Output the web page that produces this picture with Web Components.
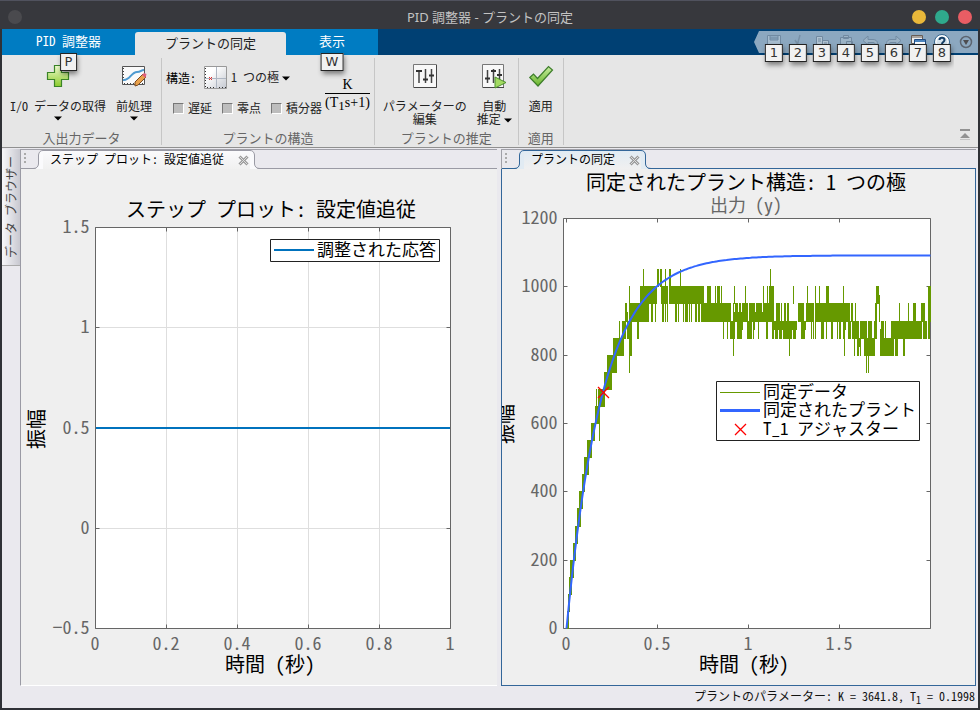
<!DOCTYPE html>
<html lang="ja">
<head>
<meta charset="utf-8">
<title>PID 調整器 - プラントの同定</title>
<style>
html, body { height: 100%; margin: 0; }
body { font: 12px/13px "Noto Sans Mono CJK JP", "Noto Sans CJK JP", sans-serif; color: #222; background: #37383d; }
</style>
</head>
<body>
<app-window>
  <title-bar slot="title">PID 調整器 - プラントの同定</title-bar>
  <tab-strip slot="tabs">
    <ribbon-tab tip="P" style="--pad:34px">PID 調整器</ribbon-tab>
    <ribbon-tab selected style="--pad:30px">プラントの同定</ribbon-tab>
    <ribbon-tab tip="W" style="--pad:33px">表示</ribbon-tab>
    <quick-bar slot="quick"></quick-bar>
  </tab-strip>
  <tool-ribbon slot="ribbon">
    <ribbon-section label="入出力データ">
      <tool-button icon="plus" menu="below">I/O データの取得</tool-button>
      <tool-button icon="preprocess" menu="below">前処理</tool-button>
    </ribbon-section>
    <ribbon-section label="プラントの構造" style="--left:4px;--right:4px"><structure-form></structure-form></ribbon-section>
    <ribbon-section label="プラントの推定" style="--right:6px">
      <tool-button icon="sliders">パラメーターの<br>編集</tool-button>
      <tool-button icon="auto" menu="inline">自動<br>推定</tool-button>
    </ribbon-section>
    <ribbon-section label="適用" style="--left:10px;--right:10px">
      <tool-button icon="check">適用</tool-button>
    </ribbon-section>
  </tool-ribbon>
  <side-rail slot="rail">データ ブラウザー</side-rail>
  <doc-panel slot="left" label="ステップ プロット: 設定値追従"><axes-plot kind="step"></axes-plot></doc-panel>
  <doc-panel slot="right" label="プラントの同定" active><axes-plot kind="plant"></axes-plot></doc-panel>
  <status-bar slot="status">プラントのパラメーター: K = 3641.8, T<sub>1</sub> = 0.1998</status-bar>
</app-window>

<script>
function define(name, template) {
  customElements.define(name, class extends HTMLElement {
    constructor() { super(); this.attachShadow({ mode: 'open' }); }
    connectedCallback() {
      this.shadowRoot.innerHTML = '<style>*{box-sizing:border-box}button{font:inherit;color:inherit;background:none;border:0;padding:0;margin:0}svg{display:block}</style>' +
        (typeof template === 'function' ? template(this) : template);
    }
  });
}

define('key-tip', `<style>
:host{position:absolute;z-index:5;left:50%;transform:translateX(-50%);box-sizing:border-box;padding:0 4px;
 border:1px solid #222;background:#f1f1f1;color:#333;font:13px/16px "DejaVu Sans",sans-serif;box-shadow:1px 3px 5px #0007}
</style><slot></slot>`);

define('title-bar', `<style>
:host{display:grid;grid-template-columns:1fr auto 1fr;align-items:center;height:29px;box-sizing:border-box;padding:3px 8px 0;
 background:#37383d;border-top:1px solid #50525e;color:#c3c3c3;font:13px/20px "Noto Sans","Noto Sans CJK JP",sans-serif}
button{display:block;width:14px;height:14px;border-radius:50%;background:var(--c)}
.ctl{display:flex;gap:9px;justify-content:flex-end}
</style><span><button style="--c:#4a4a4e" aria-label="メニュー"></button></span><span><slot></slot></span>
<span class="ctl"><button style="--c:#e9b83a" aria-label="最小化"></button><button style="--c:#2fa98d" aria-label="最大化"></button><button style="--c:#e85d64" aria-label="閉じる"></button></span>`);

define('app-window', `<style>
:host{display:flex;flex-direction:column;min-height:100%;box-sizing:border-box;background:#2f3136;padding-bottom:2px}
.frame{flex:1;display:flex;flex-direction:column;margin:0 2px;background:#eae9ee}
.work{flex:1;display:grid;grid-template-columns:18px 477fr 4px 475fr 2px;padding-top:1px}
.l{grid-column:2;display:grid}.r{grid-column:4;display:grid}
</style><slot name="title"></slot><div class="frame"><slot name="tabs"></slot><slot name="ribbon"></slot>
<main class="work"><slot name="rail"></slot><div class="l"><slot name="left"></slot></div><div class="r"><slot name="right"></slot></div></main>
<slot name="status"></slot></div>`);

define('tab-strip', `<style>
:host{display:flex;justify-content:space-between;height:26px;background:#004073}
.tabs{display:flex;align-items:flex-end;background:#007cc2}
</style><nav class="tabs"><slot></slot></nav><slot name="quick"></slot>`);

define('ribbon-tab', el => `<style>
:host{display:block;position:relative;height:26px;color:#fff;font-size:13px}
:host([selected]){height:23px;background:#e6e6e6;color:#222;border-radius:3px 3px 0 0}
button{height:100%;padding:0 var(--pad) 3px;line-height:20px;white-space:nowrap;display:block}
:host([selected]) button{padding-bottom:2px}
key-tip{top:24px}
</style><button><slot></slot></button>${el.getAttribute('tip') ? `<key-tip>${el.getAttribute('tip')}</key-tip>` : ''}`);

const quickIcons = [
  ['保存', '<path d="M1.5 1.500h13v13h-13z M4 2v4h8V2 M4 11h8" stroke="#708aa2" fill="#a7bdcf"/><path d="M4 4h8" stroke="#708aa2"/>'],
  ['切り取り', '<path d="M10 1L7 12M5 6l5 8" stroke="#7890a7" fill="none" stroke-width="1.5"/>'],
  ['コピー', '<path d="M2.500 2.500h6v9h-6z M8.500 6.500h6v8h-6z M4 5h3 M4 7h3 M10 9h3 M10 11h3" fill="#b0c3d2" stroke="#7189a0"/>'],
  ['貼り付け', '<path d="M2.500 3.500h11v11h-11z M5.500 1.500h5v3h-5z M8.500 7.500h6v7h-6z" fill="#9db4c7" stroke="#7189a0"/>'],
  ['元に戻す', '<path d="M6 2L1 6.500 6 11V8.500h5c3 0 3 4 0 5h2c4-3 3-8-2-8H6z" fill="#9bb2c5" stroke="#738ca4"/>'],
  ['やり直し', '<path d="M10 2l5 4.500-5 4.500V8.500H5c-3 0-3 4 0 5H3c-4-3-3-8 2-8h5z" fill="#9bb2c5" stroke="#738ca4"/>'],
  ['ウィンドウ', '<path d="M1.500 1.500h11v8h-11z" fill="#eee" stroke="#665c55"/><path d="M2 3h10" stroke="#665c55"/><path d="M4.500 5.500h11v8h-11z" fill="#fff" stroke="#204b80"/><path d="M5 7h10" stroke="#4b83bd" stroke-width="2"/>'],
  ['ヘルプ', '<circle cx="8" cy="8" r="6.500" fill="#d9e5ee" stroke="#fff" stroke-width="2"/><circle cx="8" cy="8" r="7.500" fill="none" stroke="#35658d"/><path d="M5.500 6c0-3 5-3 5 0 0 2-2.500 2-2.500 4" fill="none" stroke="#163f66" stroke-width="2"/>']
];
define('quick-bar', `<style>
:host{display:flex;margin-top:2px;height:22px;padding-left:8px;background:#8ca8c0;clip-path:polygon(0 50%,5px 0,100% 0,100% 22px,calc(100% - 24px) 22px,calc(100% - 24px) 60px,5px 60px,5px 100%)}
.q{position:relative;width:24px}.q button{display:grid;place-items:center;width:24px;height:22px}
key-tip{top:13px}
</style>${quickIcons.map(([n, s], i) => `<span class="q"><button aria-label="${n}"><svg width="16" height="16" viewBox="0 0 16 16">${s}</svg></button><key-tip>${i + 1}</key-tip></span>`).join('')}
<span class="q"><button aria-label="オプション"><svg width="14" height="14" viewBox="0 0 14 14"><circle cx="7" cy="7" r="5.500" fill="none" stroke="#5c6570" stroke-width="1.500"/><path d="M4 5h6L7 10z" fill="#4d4d50"/></svg></button></span>`);

define('tool-ribbon', `<style>
:host{display:flex;padding:3px 0 2px;background:#e6e6e6;border-bottom:1px solid #909090}
button{margin:0 7px 5px auto;align-self:flex-end}
</style><slot></slot><button aria-label="リボンを最小化"><svg width="12" height="12" viewBox="0 0 12 12"><path d="M1 1h10v2H1z M6 5l5 5H1z" fill="#929292"/><path d="M1 11.500h10" stroke="#c4c4c4"/></svg></button>`);

define('ribbon-section', el => `<style>
:host{display:flex;flex-direction:column;border-right:1px solid #c6c6c6}
.row{display:flex;gap:10px;height:73px;padding:0 var(--right,9px) 0 var(--left,8px)}
.t{height:14px;font-size:13px;line-height:13px;text-align:center;color:#666}
</style><div class="row"><slot></slot></div><div class="t">${el.getAttribute('label')}</div>`);

const sliders = '<path d="M.5.500h23v23H.5z" fill="#f8f8f8" stroke="#777"/><path d="M1 23.500h22.500V1" stroke="#444" fill="none"/><path d="M6 6v13M12.500 5v14M18.500 5v14" stroke="#444" stroke-width="1.500"/><path d="M3 7h6M10 15.500h5M16 11.500h5" stroke="#333" stroke-width="2"/>';
const icons = {
  plus: '<defs><linearGradient id="g" x2="0" y2="1"><stop stop-color="#effcd0"/><stop offset="1" stop-color="#8ccb2c"/></linearGradient></defs><path d="M8.500 1.500h7v7h7v7h-7v7h-7v-7h-7v-7h7z" fill="url(#g)" stroke="#3b8428" stroke-width="1.200"/>',
  preprocess: '<path d="M.5 2.500h22v18H.5z" fill="#fafafa" stroke="#555"/><path d="M2 19.500h20M1.500 4v15" stroke="#444" stroke-dasharray="1 2"/><path d="M1 16C8 17 9 8 15 8c4 0 4-2 7-2" fill="none" stroke="#4e9ad0" stroke-width="2"/><path d="M13 18l8-8 3 3-8 8-3 1z" fill="#e9a14a" stroke="#7a4a20"/><path d="M20 11l2-2 2.500 1-1 4z" fill="#df5f7b"/>',
  sliders,
  auto: '<path d="M.5.500h21v23H.5z" fill="#f8f8f8" stroke="#777"/><path d="M1 23.500h21" stroke="#444"/><path d="M5.500 6v13M11.500 5v14M17.500 5v14" stroke="#444" stroke-width="1.500"/><path d="M3 14.500h5M9 7h5M15 11h5" stroke="#333" stroke-width="2"/><path d="M13 13l11 5.500-11 5.500z" fill="#a3da62" stroke="#4c902d"/>',
  check: '<defs><linearGradient id="g" x2="0" y2="1"><stop stop-color="#c7eda0"/><stop offset="1" stop-color="#69b52b"/></linearGradient></defs><path d="M.8 13.500L4.500 10l4 4.500L19.500 2.500 23.500 6 9 22z" fill="url(#g)" stroke="#3d7d2b" stroke-width="1.200"/>'
};
const arrow = '<svg class="arrow" width="8" height="5" viewBox="0 0 8 5"><path d="M0 .5h8L4 4.500z" fill="#000"/></svg>';
define('tool-button', el => {
  const menu = el.getAttribute('menu');
  return `<style>
:host{display:block}
button{display:flex;flex-direction:column;align-items:center;padding-top:6px;white-space:nowrap}
.icon{overflow:visible;margin-bottom:11px}
.below{display:grid;height:13px;place-items:center}
.txt .arrow{display:inline-block;margin-left:3px;vertical-align:1px}
</style><button><svg class="icon" width="24" height="24" viewBox="0 0 24 24">${icons[el.getAttribute('icon')]}</svg>
<span class="txt"><slot></slot>${menu === 'inline' ? arrow : ''}</span>${menu === 'below' ? `<span class="below">${arrow}</span>` : ''}</button>`;
});

define('structure-form', `<style>
:host{display:flex;gap:3px}
.top{display:flex;align-items:center;margin-top:7px;height:24px;color:#000}
.top svg{margin:0 4px 0 8px}
select{appearance:none;border:0;padding:0 11px 0 0;margin:0;font:inherit;color:#222;line-height:16px;background:none;width:60px}
.sel{position:relative}.sel .arrow{position:absolute;right:1px;top:7px;margin:0;pointer-events:none}
.checks{display:flex;gap:10px;margin:12px 0 0 7px}
.checks label{display:flex;align-items:center;gap:4px;line-height:14px;white-space:nowrap}
input{appearance:none;width:11px;height:11px;margin:0;background:#bdbdbd;border:1px solid #fff;border-top-color:#777;border-left-color:#777}
.tf{align-self:flex-start;margin-top:18px;font:14px/17px "Liberation Serif",serif;color:#000;text-align:center}
.tf b{display:block;font-weight:400;border-bottom:1px solid #000}
.tf sub{font-size:13px;line-height:0;vertical-align:-3px}
</style><div><div class="top"><label for="s">構造:</label>
<svg width="23" height="23" viewBox="0 0 23 23"><defs><linearGradient id="g" x2="1" y2="1"><stop offset=".3" stop-color="#fff"/><stop offset="1" stop-color="#c4c8d0"/></linearGradient></defs><path d="M.5.500h22v22H.5z" fill="url(#g)" stroke="#999"/><path d="M1.500 2v19.500H22" fill="none" stroke="#333" stroke-dasharray="1 2"/><path d="M12.500 1v21M1 12.500h21" stroke="#aeb6c2"/><path d="M5 11l3 3M8 11l-3 3" stroke="#e03030"/></svg>
<span class="sel"><select id="s"><option>1 つの極</option></select>${arrow}</span></div>
<div class="checks"><label><input type="checkbox">遅延</label><label><input type="checkbox">零点</label><label><input type="checkbox">積分器</label></div></div>
<div class="tf"><b>K</b>(T<sub>1</sub>s+1)</div>`);

define('side-rail', `<style>
:host{display:block}
button{display:block;width:18px;height:117px;color:#444;background:linear-gradient(270deg,#f8f8fa,#c8c8d0);border-top:1px solid #aaa;
 writing-mode:vertical-rl;text-orientation:sideways;transform:rotate(180deg);white-space:nowrap;text-align:center;line-height:18px}
</style><button><slot></slot></button>`);

define('doc-panel', el => {
  const a = el.hasAttribute('active'), c = a ? '#336699' : '#9a9aa4', f = a ? '#e1ebf3' : '#fafafc';
  return `<style>
:host{display:flex;flex-direction:column;min-width:0}
.bar{display:flex;height:20px;border-top:1px solid #a0a0a8;border-left:1px solid #a0a0a8;background:linear-gradient(${c},${c}) 0 100%/100% 1px no-repeat}
.grip{width:12px;padding:3px 0 0 3px}
.tab{display:flex;align-items:center;height:19px;border-top:1px solid ${c};background:linear-gradient(${f},#f0f0f0)}
.tab button{white-space:nowrap;line-height:16px;padding:0 14px 2px 7px;color:#000}.tab .x{padding:0 1px 0 0}
.body{flex:1;min-height:0;display:grid;background:#efefef;border-left:1px solid ${c};${a ? `border-right:1px solid ${c};border-bottom:1px solid ${c}` : 'border-bottom:1px solid #fff'}}
</style><div class="bar"><span class="grip"><svg width="3" height="12"><path d="M0 1h2M0 5h2M0 9h2" stroke="#aaa" stroke-width="2"/></svg></span>
<svg width="10" height="19" viewBox="0 0 10 19"><path d="M0 19Q5 19 5 14V5Q5 .5 10 .5V19z" fill="${f}"/><path d="M0 18.500Q5 18.500 5.500 14V5Q6 .5 10 .5" fill="none" stroke="${c}"/></svg>
<span class="tab"><button>${el.getAttribute('label')}</button><button class="x" aria-label="閉じる"><svg width="11" height="11" viewBox="0 0 11 11"><path d="M1.500 1.500l8 8M9.500 1.500l-8 8" stroke="#999" stroke-width="3"/><path d="M1.500 1.500l8 8M9.500 1.500l-8 8" stroke="#ddd"/></svg></button></span>
<svg width="10" height="19" viewBox="0 0 10 19"><path d="M10 19Q5 19 5 14V5Q5 .5 0 .5V19z" fill="${f}"/><path d="M10 18.500Q5 18.500 4.500 14V5Q4 .5 0 .5" fill="none" stroke="${c}"/></svg></div>
<div class="body"><slot></slot></div>`;
});

define('status-bar', `<style>
:host{display:block;padding:3px 3px 6px;text-align:right;color:#111}
::slotted(sub){font-size:10px;line-height:0}
</style><slot></slot>`);

/* Noise bands of the measured signal: [upper level, lower level, column runs]. */
const bands = [
  [1050, 1000, '93-94 107-109 110-112 115-116 119-121 130-131 220-221'],
  [1000, 950, '79-80 90-107 111-118 119-154 157-161 165-166 167-170 171-172 184-185 195-196 213-214 217-218 219-224 243-244 257-258 265-266 269-270 276-279 293-294 326-329 378-381'],
  [975, 950, '329-330'],
  [950, 900, '75-77 79-99 101-103 105-106 112-114 115-116 117-118 125-127 128-129 133-134 135-138 139-140 141-142 145-147 148-150 151-181 183-184 185-188 189-191 192-198 199-205 206-212 213-224 226-230 231-232 234-236 237-239 248-254 256-264 265-300 301-303 305-306 325-327 329-330 349-350 358-359 363-366 371-375 378-381'],
  [925, 900, '77-78 183-192 205-206 212-213'],
  [900, 850, '69-70 72-76 77-82 87-89 173-174 177-178 180-185 187-192 197-202 203-204 208-209 216-218 222-224 225-228 229-232 233-242 243-246 251-255 261-262 263-264 265-266 271-274 276-277 281-283 287-288 289-291 293-295 298-301 302-309 310-317 318-322 324-327 331-334 335-336 341-372 373-377 378-380'],
  [900, 875, '192-193 204-205 224-247 255-256 295-296'],
  [875, 850, '330-331'],
  [850, 800, '63-74 79-82 183-184 239-240 294-295 304-305 307-309 310-311 314-325 330-344 345-348 353-355'],
  [850, 825, '309-310'],
  [800, 750, '57-67 79-80 316-317 318-319'],
  [750, 700, '54-62'], [700, 650, '46-47 48-55'], [650, 600, '45-50'], [600, 550, '41-45 49-50'], [550, 500, '37-42'],
  [500, 450, '34-39'], [450, 400, '32-35'], [400, 350, '29-33'], [350, 300, '27-31'], [300, 250, '25-28'],
  [250, 200, '23-26'], [200, 150, '20-24'], [150, 100, '19-22'], [100, 50, '18-20'], [50, 0, '17-19']
];
const plots = {
  step: {
    w: 476, h: 516, box: [74.5, 58.5, 429.5, 459.5], grid: true,
    x: { at: v => 74.5 + v * 355, ticks: [0, 0.2, 0.4, 0.6, 0.8, 1] },
    y: { at: v => 459.5 - (v + 0.5) * 200.5, ticks: [-0.5, 0, 0.5, 1, 1.5] },
    title: ['ステップ プロット: 設定値追従', 250, 48], xl: ['時間 (秒)', 249, 503], yl: [16, 260],
    draw: () => '<path d="M75 259H429" stroke="#0072bd" stroke-width="2"/>',
    legend: [249.5, 70.5, 169, 22, '<path d="M253 81H293" stroke="#0072bd" stroke-width="2"/><text x="296" y="87">調整された応答</text>']
  },
  plant: {
    w: 473, h: 516, box: [61.5, 49.5, 428.5, 459.5],
    x: { at: v => 64.5 + v * 182, ticks: [0, 0.5, 1, 1.5] },
    y: { at: v => 459.5 - v * 410 / 1200, ticks: [0, 200, 400, 600, 800, 1000, 1200] },
    title: ['同定されたプラント構造: 1 つの極', 244, 21], sub: ['出力 (y)', 244, 43], xl: ['時間 (秒)', 242, 503], yl: [4, 255],
    draw: p => {
      const rects = bands.map(([hi, lo, runs]) => runs.split(' ').map(r => {
        const [a, b] = r.split('-').map(Number), t = Math.floor(p.y.at(hi)), e = Math.floor(p.y.at(lo)) + 1;
        return `M${48 + a} ${t}H${48 + b}V${e}H${48 + a}z`;
      }).join('')).join('');
      let d = '';
      for (let i = 0; i <= 182; i++) { const t = i / 91; d += (i ? 'L' : 'M') + p.x.at(t).toFixed(1) + ' ' + p.y.at(1092 * (1 - Math.exp(-t / 0.1998))).toFixed(1); }
      return `<path d="${rects}" fill="#669900" shape-rendering="crispEdges"/><path d="${d}" fill="none" stroke="#3366ff" stroke-width="2"/>
        <path d="M96 218l11 11M107 218l-11 11" stroke="#f00" stroke-width="1.300"/>`;
    },
    legend: [214.5, 212.5, 203, 59, '<path d="M218 223.500H258" stroke="#669900"/><path d="M218 241.500H258" stroke="#3366ff" stroke-width="3"/><path d="M233 255l11 11M244 255l-11 11" stroke="#f00" stroke-width="1.300"/><text x="261" y="229">同定データ</text><text x="261" y="247">同定されたプラント</text><text x="261" y="266">T_1 アジャスター</text>']
  }
};
define('axes-plot', el => {
  const p = plots[el.getAttribute('kind')], [l, t, r, b] = p.box;
  let g = '', ticks = '', nums = '';
  for (const v of p.x.ticks) {
    const x = Math.floor(p.x.at(v)) + 0.5;
    if (p.grid && x > l && x < r) g += `M${x} ${t}V${b}`;
    ticks += `M${x} ${b}v-4M${x} ${t}v4`;
    nums += `<text x="${x - 0.5}" y="${b + 21}" text-anchor="middle">${v}</text>`;
  }
  for (const v of p.y.ticks) {
    const y = Math.floor(p.y.at(v)) + 0.5;
    if (p.grid && y > t && y < b) g += `M${l} ${y}H${r}`;
    ticks += `M${l} ${y}h4M${r} ${y}h-4`;
    nums += `<text x="${l - 6}" y="${y + 5.5}" text-anchor="end">${String(v).replace('-', '−')}</text>`;
  }
  const [lx, ly, lw, lh, inner] = p.legend;
  return `<style>
:host{display:block;min-width:0;min-height:0}
svg{width:100%;height:100%;overflow-x:clip;overflow-y:visible}
.n{font-size:18px;fill:#666}.h{font-size:20px;fill:#000}.k{font-size:17px;fill:#000}
</style><svg viewBox="0 0 ${p.w} ${p.h}" role="img" aria-label="${p.title[0]}">
<path d="M${l} ${t}H${r}V${b}H${l}z" fill="#fff"/><path d="${g}" stroke="#dedede"/>
<path d="M${l} ${t}H${r}V${b}H${l}z${ticks}" fill="none" stroke="#666"/>
${p.draw(p)}<g class="n">${nums}${p.sub ? `<text x="${p.sub[1]}" y="${p.sub[2]}" text-anchor="middle">${p.sub[0]}</text>` : ''}</g>
<g class="h" text-anchor="middle"><text x="${p.title[1]}" y="${p.title[2]}">${p.title[0]}</text><text x="${p.xl[1]}" y="${p.xl[2]}">${p.xl[0]}</text>
<text transform="translate(${p.yl}) rotate(-90)" y="7">振幅</text></g>
<g class="k"><path d="M${lx} ${ly}h${lw}v${lh}h-${lw}z" fill="#fff" stroke="#222"/>${inner}</g></svg>`;
});
</script>
</body>
</html>
